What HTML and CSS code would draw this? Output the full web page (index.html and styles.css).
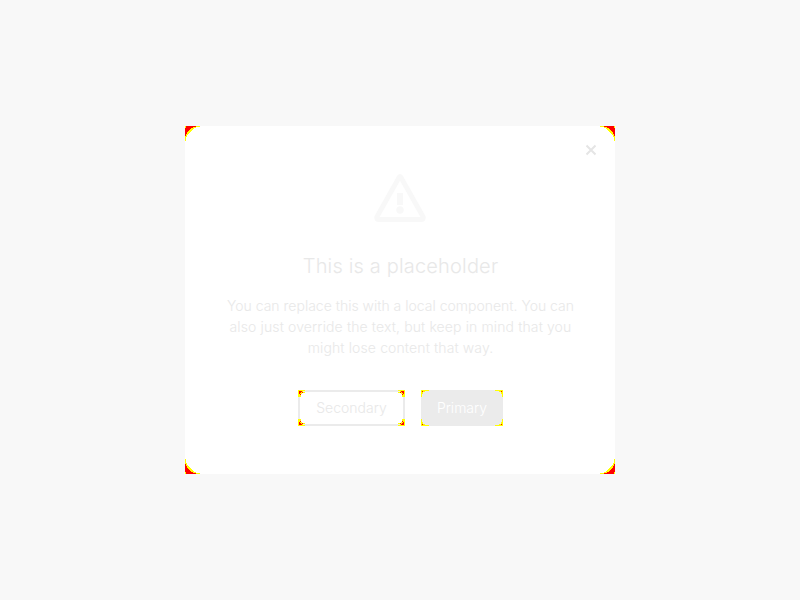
FILE: index.html
```html
<!DOCTYPE html>
<html lang="en">
<head>
<meta charset="utf-8">
<title>Dialog</title>
<link rel="stylesheet" href="styles.css">
</head>
<body>
<svg class="symbols" width="0" height="0" aria-hidden="true">
<symbol id="large-corner" viewBox="0 0 16 16"><path fill="#ff0" d="M0 0H15V1H11V2H9V3H8V4H7V5H6V6H5V7H4V8H3V9H2V11H1V15H0Z"/><path fill="#f00" d="M1 0H11V1H8V2H6V3H5V4H4V5H3V6H2V8H1V10H0V2H1Z"/></symbol>
<symbol id="outline-corner" viewBox="0 0 8 8"><path fill="#ff0" d="M0 0H7V1H5V2H7V3H4V4H3V7H0Z"/><path fill="#f00" d="M1 1H4V2H3V3H2V4H1ZM4 2H5V3H4ZM2 4H3V5H2Z"/></symbol>
<symbol id="filled-corner" viewBox="0 0 8 8"><path fill="#ff0" d="M0 0H8V1H4V2H2V4H1V7H0Z"/><path fill="#f00" d="M1 1H2V2H1Z"/></symbol>
</svg>
<main class="dialog">
<svg class="corner large tl"><use href="#large-corner"/></svg><svg class="corner large tr"><use href="#large-corner"/></svg><svg class="corner large bl"><use href="#large-corner"/></svg><svg class="corner large br"><use href="#large-corner"/></svg>
<button class="close" aria-label="Close"><svg width="12" height="12" viewBox="0 0 12 12"><path d="M1.500 1.500l9 9M10.500 1.500l-9 9"/></svg></button>
<svg class="warning" width="56" height="56" viewBox="0 0 56 56"><path class="triangle" d="M27.300 7Q28 5.800 28.700 7L51.200 47Q52 49.500 49.500 49.500H6.500Q4 49.500 4.800 47Z"/><path class="mark" d="M25 23h6v12h-6z"/><circle cx="28" cy="40" r="3.700"/></svg>
<h1>This is a placeholder</h1>
<p>You can replace this with a local component. You can <span class="looser">also just override the text, but keep in mind that you might lose content that way.</span></p>
<div class="actions">
<button class="button secondary"><svg class="corner tl"><use href="#outline-corner"/></svg><svg class="corner tr"><use href="#outline-corner"/></svg><svg class="corner bl"><use href="#outline-corner"/></svg><svg class="corner br"><use href="#outline-corner"/></svg>Secondary</button>
<button class="button primary"><svg class="corner tl"><use href="#filled-corner"/></svg><svg class="corner tr"><use href="#filled-corner"/></svg><svg class="corner bl"><use href="#filled-corner"/></svg><svg class="corner br"><use href="#filled-corner"/></svg>Primary</button>
</div>
</main>
</body>
</html>
```

FILE: styles.css
```css
* { box-sizing: border-box; }
body { margin: 0; height: 600px; display: flex; align-items: center; justify-content: center; background: #f8f8f8; font-family: Inter, sans-serif; color: #e8e8e8; }
.symbols { position: absolute; }
.dialog { position: relative; width: 430px; height: 348px; padding: 44px 40px 48px; background: #fff; display: flex; flex-direction: column; align-items: center; text-align: center; }
.corner { position: absolute; width: 8px; height: 8px; shape-rendering: crispEdges; }
.large { width: 16px; height: 16px; }
.tl { top: 0; left: 0; }
.tr { top: 0; right: 0; transform: scaleX(-1); }
.bl { bottom: 0; left: 0; transform: scaleY(-1); }
.br { bottom: 0; right: 0; transform: scale(-1); }
.close { position: absolute; top: 18px; right: 18px; width: 12px; height: 12px; padding: 0; border: 0; background: none; display: flex; }
.close path { stroke: #e5e5e5; stroke-width: 2; }
.warning { fill: #f8f8f8; }
.warning .triangle { fill: none; stroke: #f8f8f8; stroke-width: 4.8; stroke-linejoin: round; }
h1 { margin: 26px 0 0; padding-left: 1px; font-size: 20px; line-height: 28px; font-weight: 300; letter-spacing: .17px; }
p { margin: 15px 0 0; padding-left: 1px; font-size: 14px; line-height: 21px; font-weight: 300; }
.looser { letter-spacing: .12px; }
.actions { display: flex; gap: 16px; margin-top: auto; padding-left: 1px; }
.button { position: relative; display: flex; align-items: center; justify-content: center; height: 36px; padding: 0; border: 0; font: 300 14px/20px Inter, sans-serif; }
.secondary { width: 107px; box-shadow: inset 0 0 0 2px #ebebeb; background: #fff; color: #e8e8e8; }
.primary { width: 82px; background: #ebebeb; color: #fff; }
```
